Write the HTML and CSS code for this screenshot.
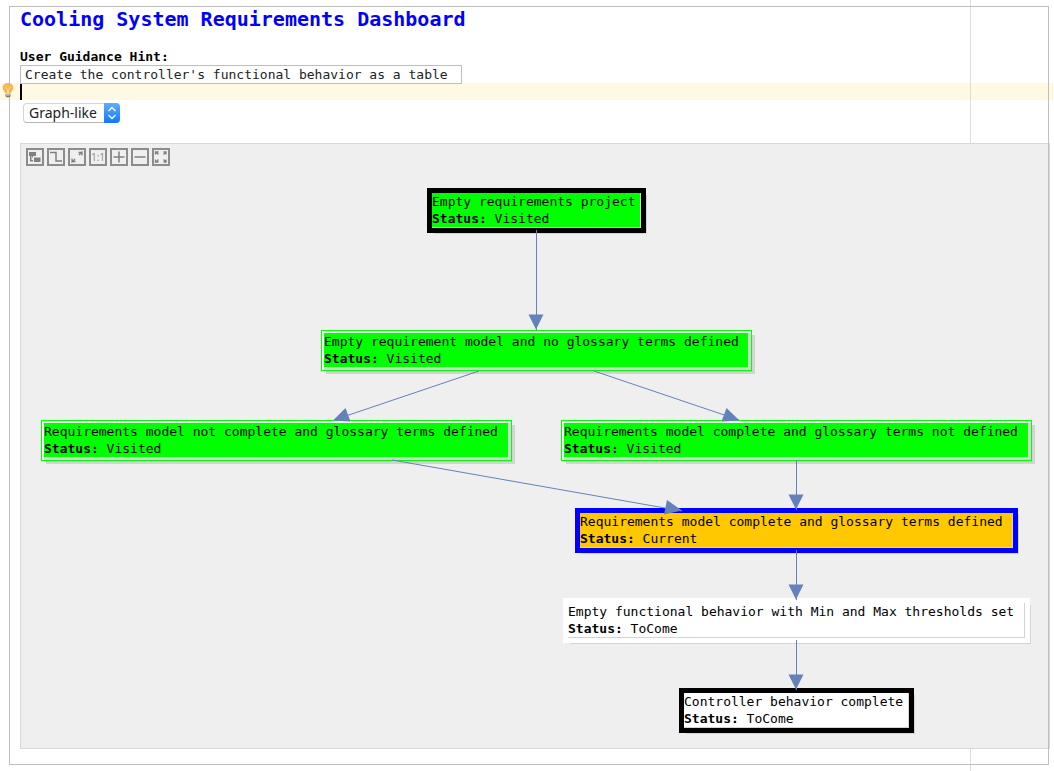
FILE: index.html
```html
<!DOCTYPE html>
<html lang="en">
<head>
<meta charset="utf-8">
<title>Cooling System Requirements Dashboard</title>
<link rel="stylesheet" href="styles.css">
</head>
<body>
<main class="editor">
  <h1 class="title">Cooling System Requirements Dashboard</h1>
  <h2 class="label">User Guidance Hint:</h2>
  <p class="hint">Create the controller's functional behavior as a table</p>
  <div class="caret-line">
    <svg class="bulb" width="12" height="15" viewBox="0 0 12 15" aria-hidden="true">
      <path d="M6 0C2.500 0 0.700 2.200 0.700 4.800C0.700 7.400 3 8.400 3.300 10.500H8.700C9 8.400 11.300 7.400 11.300 4.800C11.300 2.200 9.500 0 6 0Z" fill="#f9b550"/>
      <path d="M3.500 4L5.500 6.500V10M8.500 4L6.500 6.500V10" fill="none" stroke="#fde0a0"/>
      <path d="M3.300 11H8.700V12.200H3.300Z" fill="#b5b0a8"/>
      <path d="M3 12.500H9V13.300H8L7.500 14.200H4.500L4 13.300H3Z" fill="#77736e"/>
    </svg>
    <span class="caret"></span>
  </div>
  <div class="picker">
    <select class="mode" aria-label="View mode"><option>Graph-like</option></select>
    <svg class="stepper" width="16" height="20" viewBox="0 0 16 20" aria-hidden="true">
      <path d="M4.500 8L8 4.500L11.500 8M4.500 12L8 15.500L11.500 12" fill="none" stroke="#fff" stroke-width="1.300"/>
    </svg>
  </div>
  <section class="graph" aria-label="Requirements graph">
    <div class="toolbar">
      <button class="tool" aria-label="Layout"><svg viewBox="0 0 18 18"><path class="solid" d="M3 4H10V8H7V9.500H6V8H3Z M4 8H5.500V12H7V13.500H4Z M8 9.500H14.500V14H8Z"/></svg></button>
      <button class="tool" aria-label="Route edges"><svg viewBox="0 0 18 18"><path class="line" d="M3 4.500H9V13H15"/></svg></button>
      <button class="tool" aria-label="Fit"><svg viewBox="0 0 18 18"><path class="thin" d="M10.500 4.500H14V7.500M11 7L14.500 3.500M7.500 13.500H4V10.500M7 11L3.500 14.500"/></svg></button>
      <button class="tool tool-text" aria-label="Actual size">1:1</button>
      <button class="tool" aria-label="Zoom in"><svg viewBox="0 0 18 18"><path class="line" d="M9 3.500V14.500M3.500 9H14.500"/></svg></button>
      <button class="tool" aria-label="Zoom out"><svg viewBox="0 0 18 18"><path class="line" d="M3.500 9H14.500"/></svg></button>
      <button class="tool" aria-label="Fit content"><svg viewBox="0 0 18 18"><path class="thin" d="M3.500 3.500L6.500 6.500M3.500 6.500V4H6.500M14.500 3.500L11.500 6.500M11.500 4H14V6.500M3.500 14.500L6.500 11.500M3.500 11.500V14H6.500M14.500 14.500L11.500 11.500M14 11.500V14H11.500"/></svg></button>
    </div>
    <div class="node heavy visited n1"><div class="body">Empty requirements project<br><b>Status:</b> Visited</div></div>
    <div class="node light visited n2"><div class="body">Empty requirement model and no glossary terms defined<br><b>Status:</b> Visited</div></div>
    <div class="node light visited n3"><div class="body">Requirements model not complete and glossary terms defined<br><b>Status:</b> Visited</div></div>
    <div class="node light visited n4"><div class="body">Requirements model complete and glossary terms not defined<br><b>Status:</b> Visited</div></div>
    <div class="node heavy current n5"><div class="body">Requirements model complete and glossary terms defined<br><b>Status:</b> Current</div></div>
    <div class="node heavy pending n6"><div class="body">Empty functional behavior with Min and Max thresholds set<br><b>Status:</b> ToCome</div></div>
    <div class="node heavy n7"><div class="body">Controller behavior complete<br><b>Status:</b> ToCome</div></div>
    <svg class="edges" width="1028" height="604" viewBox="21 144 1028 604" aria-hidden="true">
      <path class="edge" d="M536.500 230V330M479 371L334 420M594 371L739 420M392 460L682 511M796.500 460V510M796.500 550V600M796.500 640V690"/>
      <path class="arrow" d="M528.500 314.500H543.500L536 329.500Z"/>
      <path class="arrow" d="M333 420.500L345.500 408L350.500 421.500ZM739.500 420.500L726.500 408L721.500 421.500ZM682 510.500L667 500L664 514.500Z"/>
      <path class="arrow" d="M788.500 494.500H803.500L796 509.500ZM788.500 584.500H803.500L796 599.500ZM788.500 674.500H803.500L796 689.500Z"/>
    </svg>
  </section>
</main>
</body>
</html>
```
FILE: styles.css
```css
* { box-sizing: border-box; }
body {
  margin: 0;
  position: relative;
  min-height: 100vh;
  padding: 6px 5px 6px 9px;
  background: #fff;
  color: #000;
  font: 13px/17px "DejaVu Sans Mono", monospace;
  overflow-x: hidden;
}
/* right margin guide */
body::before {
  content: "";
  position: absolute;
  top: 0;
  bottom: 0;
  right: 83px;
  z-index: 1;
  border-left: 1px solid #dcdcdc;
}
.editor { position: relative; padding: 1px 0 16px 11px; }
.editor::after {
  content: "";
  position: absolute;
  inset: 0;
  z-index: 4;
  border: 1px solid #bebebe;
  pointer-events: none;
}
.title { margin: 0 0 17px; font-size: 20px; line-height: 24px; color: #00f; }
.label { margin: 0; font-size: 13px; line-height: 17px; }
.hint {
  position: relative;
  z-index: 2;
  width: fit-content;
  min-width: 442px;
  margin: 0;
  padding: 0 4px;
  border: 1px solid #bebebe;
  color: #222;
}
.caret-line {
  position: relative;
  height: 17px;
  margin: -1px -5px 0 -20px;
  padding-left: 20px;
  background: #fff9e3;
}
.caret { display: block; width: 2px; height: 17px; background: #000; }
.bulb { position: absolute; left: 2px; top: 0; z-index: 5; }
.picker { position: relative; width: 97px; margin: 3px 0 20px 3px; }
.mode {
  display: block;
  width: 100%;
  height: 20px;
  padding: 0 16px 0 5px;
  appearance: none;
  border: 1px solid #d5d5d5;
  border-bottom-color: #b5b5b5;
  border-radius: 4px;
  background: #fff;
  color: #222;
  font: 14px/18px "Noto Sans", sans-serif;
}
.stepper {
  position: absolute;
  right: 0;
  top: 0;
  border-radius: 0 4px 4px 0;
  background: linear-gradient(#62aefb, #0f78fb);
  pointer-events: none;
}
.graph {
  position: relative;
  z-index: 2;
  height: 606px;
  margin-right: -1px;
  padding: 4px 5px;
  border: 1px solid #d8d8d8;
  background: #efefef;
  overflow: hidden;
}
.toolbar { display: flex; gap: 3px; }
.tool {
  width: 18px;
  height: 18px;
  padding: 0;
  border: 2px solid #8c8c8c;
  background: transparent;
  color: #8c8c8c;
}
.tool svg { display: block; width: 18px; height: 18px; margin: -2px; }
.tool-text { font: 10px/14px "Open Sans", sans-serif; }
.solid { fill: #808080; }
.line { fill: none; stroke: #808080; stroke-width: 1.5; }
.thin { fill: none; stroke: #808080; stroke-width: 1.3; }
.node { position: absolute; white-space: nowrap; }
.heavy {
  border: 5px solid #000;
  padding: 0 1px 1px 0;
  background: #d3d3d3;
  box-shadow: 4px 4px 0 -3px #d3d3d3;
}
.light {
  border: 1px solid #0f0;
  padding: 2px 3px 3px 2px;
  background: #d3d3d3;
  box-shadow: inset 2px 2px 0 #efefef, 3px 3px 0 #d3d3d3;
}
/* keeps the shadow clear of the top-right and bottom-left corners */
.light { box-shadow: inset 2px 2px 0 #efefef, 4px 4px 0 -1px #d3d3d3; }
.body { background: #fff; }
.visited .body { background: #0f0; }
.current { border-color: #00f; }
.current .body { background: #ffc800; }
.pending { border-color: #fff; }
.n1 { left: 406px; top: 44px; min-width: 219px; }
.n2 { left: 300px; top: 186px; min-width: 431px; }
.n3 { left: 20px; top: 276px; min-width: 471px; }
.n4 { left: 540px; top: 276px; min-width: 471px; }
.n5 { left: 554px; top: 364px; min-width: 443px; }
.n6 { left: 542px; top: 454px; min-width: 467px; }
.n7 { left: 658px; top: 544px; min-width: 235px; }
.edges { position: absolute; left: 0; top: 0; pointer-events: none; }
.edge { fill: none; stroke: #6482b9; stroke-width: 1; }
.arrow { fill: #6482b9; }
```
